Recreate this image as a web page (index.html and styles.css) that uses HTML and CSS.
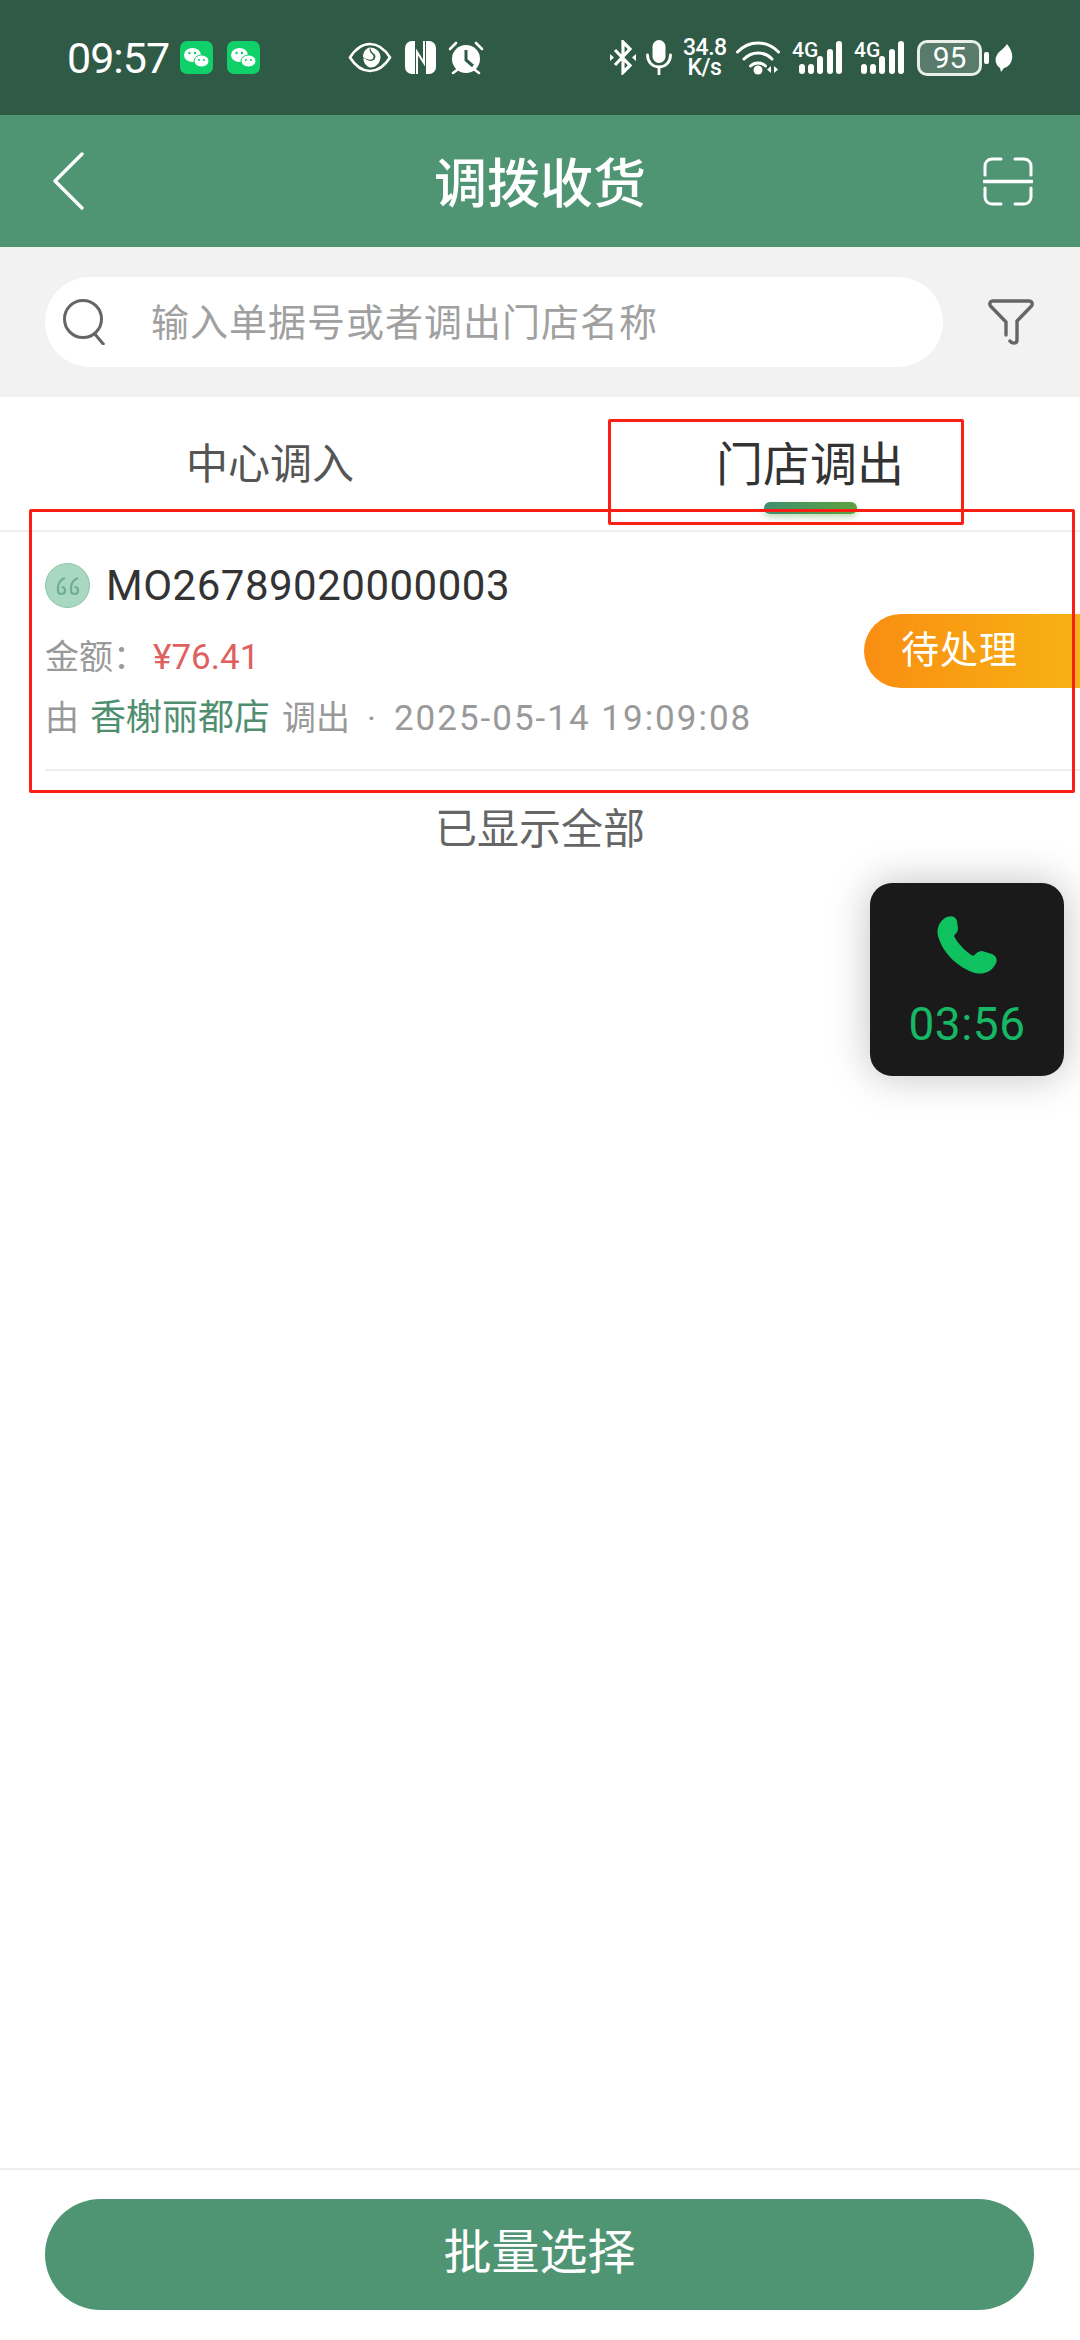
FILE: index.html
```html
<!DOCTYPE html>
<html lang="zh">

<head>
   <meta charset="utf-8">
   <title>调拨收货</title>
   <link rel="stylesheet" href="styles.css">
</head>

<body>
   <div id="page">
      <div id="status">
         <span class="clock">09:57</span>
         <svg class="wx" viewBox="0 0 33 33">
            <rect width="33" height="33" rx="7" fill="#0fd069" />
            <ellipse cx="12.500" cy="14" rx="8.500" ry="7" fill="#fff" />
            <ellipse cx="21.500" cy="20" rx="7.500" ry="6" fill="#fff" stroke="#0fd069" />
            <circle cx="9.500" cy="12" r="1.200" fill="#0fd069" />
            <circle cx="15" cy="12" r="1.200" fill="#0fd069" />
            <circle cx="19" cy="19" r="1" fill="#0fd069" />
            <circle cx="24" cy="19" r="1" fill="#0fd069" />
         </svg>
         <svg class="wx second" viewBox="0 0 33 33">
            <rect width="33" height="33" rx="7" fill="#0fd069" />
            <ellipse cx="12.500" cy="14" rx="8.500" ry="7" fill="#fff" />
            <ellipse cx="21.500" cy="20" rx="7.500" ry="6" fill="#fff" stroke="#0fd069" />
            <circle cx="9.500" cy="12" r="1.200" fill="#0fd069" />
            <circle cx="15" cy="12" r="1.200" fill="#0fd069" />
            <circle cx="19" cy="19" r="1" fill="#0fd069" />
            <circle cx="24" cy="19" r="1" fill="#0fd069" />
         </svg>

         <svg class="eye" viewBox="0 0 44 31">
            <path d="M2 15.500C8 6 15 2 22 2s14 4 20 13.500C36 25 29 29 22 29S8 25 2 15.500z" fill="none" stroke="#fff" stroke-width="2.600" />
            <path d="M22 5.500c1 2.500 1 4 3 5.500 2.500 1.500 3 3.500 2 5.500-1 2-4 3-6.500 2-2-.5-3.500-2-5-2.500-.5 4 3 9 6.500 9.500 6 .5 10.500-5 10.500-10.500S27.500 5.500 22 5.500z" fill="#fff" />
            <path d="M15 15c0-5 3-9 7-9.500-1 3 0 5 2 6.500 2 1.500 2 4 .5 5-2 1.500-6 .5-9.500-2z" fill="#fff" />
         </svg>
         <svg class="nfc" viewBox="0 0 31 33">
            <rect width="31" height="33" rx="7" fill="#fff" />
            <rect x="10" width="11" height="33" fill="#2f5a46" />
            <path d="M12 33V11l7 11V0" fill="none" stroke="#fff" stroke-width="2" />
         </svg>
         <svg class="alarm" viewBox="0 0 36 34">
            <circle cx="18" cy="18" r="14" fill="#fff" />
            <path d="M18 9v10l7 6" fill="none" stroke="#2f5a46" stroke-width="3" />
            <path d="M2 8l6-6M34 8l-6-6M5 32l4-3M31 32l-4-3" fill="none" stroke="#fff" stroke-width="2.600" stroke-linecap="round" />
         </svg>

         <div class="status-right">
            <svg class="bt" viewBox="0 0 26 35">
               <path d="M5 10l15 15.500-7 7V2l7 7L5 25" fill="none" stroke="#fff" stroke-width="3.200" />
               <path d="M0 14l4 3.500-4 3.500zM26 14l-4 3.500 4 3.500z" fill="#fff" />
            </svg>
            <svg class="mic" viewBox="0 0 26 35">
               <rect x="6.500" y="0" width="13" height="23" rx="6.500" fill="#fff" />
               <path d="M1.500 15c0 7 5 12 11.500 12s11.500-5 11.500-12M13 27v8" fill="none" stroke="#fff" stroke-width="2.800" stroke-linecap="round" />
            </svg>
            <div class="speed">34.8<br>K/s</div>
            <svg class="wifi" viewBox="0 0 44 34">
               <path d="M1.500 11C13 -1 31 -1 42.500 11M8 18c8-8 20-8 28 0M14.500 25c4-4 11-4 15 0" fill="none" stroke="#fff" stroke-width="3" stroke-linecap="round" />
               <circle cx="22" cy="29" r="4.500" fill="#fff" />
               <path d="M35 25v7l-4-3.500zM38 25v7l4-3.500z" fill="#fff" />
            </svg>
            <svg class="signal" viewBox="0 -4 50 40">
               <text x="0" y="17" class="four-g">4G</text>
               <rect x="7" y="24" width="6" height="10" rx="3" fill="#fff" />
               <rect x="16" y="24" width="6" height="10" rx="3" fill="#fff" />
               <rect x="25" y="16" width="6" height="18" rx="3" fill="#fff" />
               <rect x="35" y="9" width="6" height="25" rx="3" fill="#fff" />
               <rect x="44" y="1" width="6" height="33" rx="3" fill="#fff" />
            </svg>
            <svg class="signal" viewBox="0 -4 50 40">
               <text x="0" y="17" class="four-g">4G</text>
               <rect x="7" y="24" width="6" height="10" rx="3" fill="#fff" />
               <rect x="16" y="24" width="6" height="10" rx="3" fill="#fff" />
               <rect x="25" y="16" width="6" height="18" rx="3" fill="#fff" />
               <rect x="35" y="9" width="6" height="25" rx="3" fill="#fff" />
               <rect x="44" y="1" width="6" height="33" rx="3" fill="#fff" />
            </svg>
            <div class="battery">95</div>
            <div class="battery-nub"></div>
            <svg class="leaf" viewBox="0 0 18 28">
               <path d="M12 0c4 5 6 10 5 15-1 5-4 8-8 9l-3 4-1-4C1 21-1 16 2 11c2-4 7-6 10-11z" fill="#fff" />
            </svg>
         </div>
      </div>

      <div id="header">
         <svg class="back" viewBox="0 0 31 58">
            <path d="M29 2L2 29l27 27" fill="none" stroke="#fff" stroke-width="3.400" stroke-linecap="round" stroke-linejoin="round" />
         </svg>
         <div class="title">调拨收货</div>
         <svg class="scan" viewBox="0 0 50 49">
            <path d="M18 2H9C5 2 2 5 2 9v9M32 2h9c4 0 7 3 7 7v9M18 47H9c-4 0-7-3-7-7v-9M32 47h9c4 0 7-3 7-7v-9" fill="none" stroke="#fff" stroke-width="3" stroke-linecap="round" />
            <path d="M1 24.500h48" stroke="#fff" stroke-width="3.400" stroke-linecap="round" />
         </svg>
      </div>

      <div id="search">
         <div class="search-box">
            <svg class="search-icon" viewBox="0 0 42 46">
               <circle cx="20" cy="20" r="18.500" fill="none" stroke="#666" stroke-width="3" />
               <path d="M31 34l10 12" stroke="#666" stroke-width="3" />
            </svg>
            <span class="placeholder">输入单据号或者调出门店名称</span>
         </div>
         <svg class="filter" viewBox="0 0 46 46">
            <path d="M18 36V23L2.500 7C1 5 2 2 5 2h36c3 0 4 3 2.500 5L29 22v19c0 4-5 4-7 1" fill="none" stroke="#666" stroke-width="3.400" stroke-linecap="round" stroke-linejoin="round" />
         </svg>
      </div>

      <div id="tabs">
         <div class="tab">中心调入</div>
         <div class="tab active">门店调出</div>
      </div>

      <div class="order">
         <div class="order-info">
            <div class="order-no">
               <svg class="quote" viewBox="0 0 45 45">
                  <circle cx="22.500" cy="22.500" r="22" fill="#a8d8c0" stroke="#8dc4aa" />
                  <path d="M20 15c-4 1.500-7 5-7 10v2.500c0 2 1.500 3.500 3.500 3.500s3.500-1.500 3.500-3.500-1.500-3.500-3.500-3.500M33 15c-4 1.500-7 5-7 10v2.500c0 2 1.500 3.500 3.500 3.500s3.500-1.500 3.500-3.500-1.500-3.500-3.500-3.500" fill="none" stroke="#6fae90" stroke-width="2.200" />
               </svg>
               <span>MO26789020000003</span>
            </div>
            <div class="order-amount">金额：<span class="money">¥76.41</span></div>
            <div class="order-from">由<span class="shop">香榭丽都店</span>调出<span class="dot">·</span><span class="date">2025-05-14 19:09:08</span></div>
         </div>
         <div class="order-state">待处理</div>
      </div>

      <div class="list-end">已显示全部</div>

      <div class="spacer"></div>

      <div id="footer">
         <div class="batch-btn">批量选择</div>
      </div>

      <div class="call">
         <svg class="call-icon" viewBox="0 0 60 58">
            <path d="M10 1C15-1 19 1 20 5l1 8c0 3-3 5-4 7 4 8 12 16 19 20 3-2 5-5 9-5l10 3c5 2 6 7 3 11-4 7-12 10-20 8C22 52 6 38 1 20-1 12 3 4 10 1z" fill="#0fc15f" />
         </svg>
         <span class="call-time">03:56</span>
      </div>

      <div class="mark mark-tab"></div>
      <div class="mark mark-order"></div>
   </div>
</body>

</html>
```

FILE: styles.css
```css
* {
   box-sizing: border-box;
}

body {
   margin: 0;
   background: #fff;
   font-family: Roboto, "Noto Sans CJK SC", sans-serif;
}

svg {
   display: block;
   flex: none;
}

#page {
   position: relative;
   width: 1080px;
   height: 2340px;
   display: flex;
   flex-direction: column;
   overflow: hidden;
}

/* status bar */
#status {
   height: 115px;
   background: #2f5a46;
   color: #fff;
   display: flex;
   align-items: center;
   padding: 0 67px 0 67px;
}

.clock {
   width: 101px;
   font-size: 43px;
   letter-spacing: -1px;
   white-space: nowrap;
}

.wx {
   width: 33px;
   height: 33px;
   margin-left: 12px;
}

.wx.second {
   margin-left: 14px;
}

.eye {
   width: 44px;
   height: 31px;
   margin-left: 88px;
}

.nfc {
   width: 31px;
   height: 33px;
   margin-left: 13px;
}

.alarm {
   width: 36px;
   height: 34px;
   margin-left: 12px;
}

.status-right {
   margin-left: auto;
   display: flex;
   align-items: center;
}

.bt {
   width: 26px;
   height: 35px;
}

.mic {
   width: 26px;
   height: 35px;
   margin-left: 10px;
}

.speed {
   width: 43px;
   margin-left: 11px;
   font-size: 23px;
   font-weight: 500;
   line-height: 20px;
   letter-spacing: -.5px;
   text-align: center;
}

.wifi {
   width: 44px;
   height: 34px;
   margin-left: 10px;
}

.signal {
   width: 50px;
   height: 40px;
   margin-left: 12px;
   margin-top: -4px;
}

.four-g {
   font-size: 21px;
   font-weight: 500;
   fill: #fff;
}

.battery {
   width: 65px;
   height: 36px;
   margin-left: 13px;
   border: 3px solid #e8efeb;
   border-radius: 10px;
   background: rgba(255, 255, 255, .2);
   font-size: 30px;
   line-height: 30px;
   text-align: center;
}

.battery-nub {
   width: 5px;
   height: 12px;
   margin-left: 2px;
   border-radius: 2px;
   background: #fff;
}

.leaf {
   width: 18px;
   height: 28px;
   margin-left: 6px;
}

/* title bar */
#header {
   height: 132px;
   background: #4f9574;
   display: grid;
   grid-template-columns: 1fr auto 1fr;
   align-items: center;
   padding: 0 47px;
}

.back {
   width: 31px;
   height: 58px;
   margin-left: 6px;
}

.title {
   padding-bottom: 3px;
   color: #fff;
   font-size: 53px;
   font-weight: 500;
}

.scan {
   width: 50px;
   height: 49px;
   justify-self: end;
}

/* search */
#search {
   height: 150px;
   background: #f1f2f1;
   display: flex;
   align-items: center;
   padding: 0 46px 0 45px;
}

.search-box {
   flex: 1;
   height: 90px;
   background: #fff;
   border-radius: 45px;
   display: flex;
   align-items: center;
   padding-left: 18px;
}

.search-icon {
   width: 42px;
   height: 46px;
}

.placeholder {
   margin-left: 46px;
   padding-bottom: 5px;
   color: #a0a0a0;
   font-size: 38px;
   letter-spacing: 1px;
}

.filter {
   width: 46px;
   height: 46px;
   margin-left: 45px;
}

/* tabs */
#tabs {
   height: 135px;
   display: grid;
   grid-template-columns: 1fr 1fr;
   border-bottom: 2px solid #eee;
}

.tab {
   position: relative;
   display: flex;
   align-items: center;
   justify-content: center;
   padding-bottom: 7px;
   color: #555;
   font-size: 42px;
}

.tab.active {
   color: #333;
   font-size: 47px;
}

.tab.active::after {
   content: "";
   position: absolute;
   left: 224px;
   top: 105px;
   width: 93px;
   height: 12px;
   border-radius: 6px;
   background: linear-gradient(90deg, #3f9070, #5ea03f);
   box-shadow: 0 3px 6px rgba(94, 160, 63, .4);
}

/* order row */
.order {
   height: 239px;
   margin-left: 45px;
   border-bottom: 2px solid #eee;
   display: flex;
   align-items: center;
   justify-content: space-between;
}

.order-info {
   padding-top: 4px;
}

.order-no {
   display: flex;
   align-items: center;
   gap: 16px;
   color: #333;
   font-size: 42px;
   letter-spacing: .5px;
}

.quote {
   width: 45px;
   height: 45px;
}

.order-amount {
   margin-top: 22px;
   color: #999;
   font-size: 34px;
   line-height: 50px;
}

.money {
   color: #e06060;
   font-size: 35px;
   margin-left: 6px;
}

.order-from {
   margin-top: 10px;
   color: #999;
   font-size: 34px;
   line-height: 50px;
}

.shop {
   color: #4f8f70;
   font-size: 36px;
   margin: 0 12px 0 11px;
}

.dot {
   margin: 0 18px 0 17px;
}

.date {
   font-size: 35px;
   letter-spacing: 2px;
}

.order-state {
   width: 216px;
   height: 74px;
   padding-left: 37px;
   border-radius: 37px 0 0 37px;
   background: linear-gradient(90deg, #f98e12, #f7b213);
   color: #fff;
   font-size: 38px;
   letter-spacing: 1px;
   line-height: 72px;
}

.list-end {
   margin-top: 34px;
   color: #666;
   font-size: 42px;
   line-height: 50px;
   text-align: center;
}

.spacer {
   flex: 1;
}

/* bottom button */
#footer {
   border-top: 2px solid #eee;
   padding: 29px 46px 30px 45px;
}

.batch-btn {
   height: 111px;
   border-radius: 56px;
   background: #4f9574;
   color: #fff;
   font-size: 48px;
   line-height: 108px;
   text-align: center;
}

/* floating call window */
.call {
   position: absolute;
   left: 870px;
   top: 883px;
   width: 194px;
   height: 193px;
   border-radius: 22px;
   background: #1a1a1a;
   box-shadow: 0 0 40px rgba(0, 0, 0, .25);
   display: flex;
   flex-direction: column;
   align-items: center;
}

.call-icon {
   width: 60px;
   height: 58px;
   margin-top: 33px;
}

.call-time {
   margin-top: 23px;
   color: #16b765;
   font-size: 46px;
   letter-spacing: .5px;
}

/* red review marks drawn on top of the shot */
.mark {
   position: absolute;
   border: 3px solid #fa1e14;
   border-radius: 2px;
}

.mark-tab {
   left: 608px;
   top: 419px;
   width: 356px;
   height: 106px;
}

.mark-order {
   left: 29px;
   top: 509px;
   width: 1046px;
   height: 284px;
}
```
